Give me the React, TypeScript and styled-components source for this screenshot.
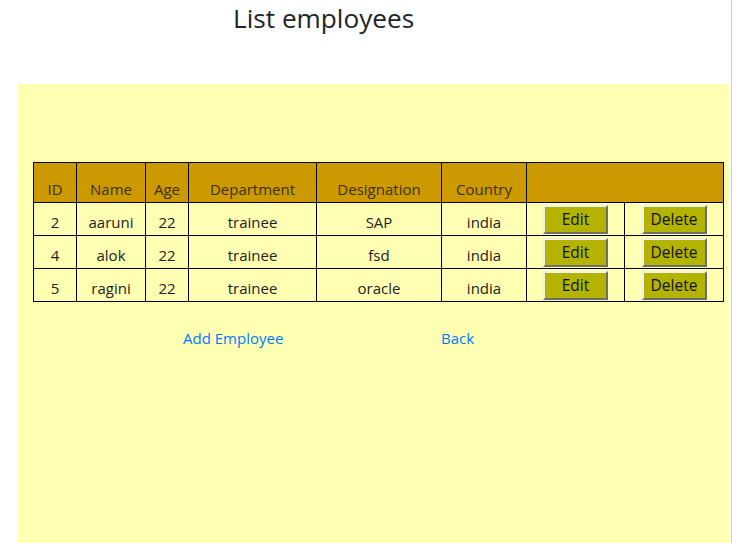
import React from "react";
import styled, { createGlobalStyle } from "styled-components";

const Global = createGlobalStyle`
  html, body { margin: 0; padding: 0; background: #fff; }
  body {
    font-family: "Open Sans", "Noto Sans", sans-serif;
    color: #212529;
    border-right: 1px solid #c8c8c8;
    min-height: 543px;
    box-sizing: border-box;
    width: 732px;
  }
`;

const Page = styled.div`
  display: flex;
  flex-direction: column;
  height: 543px;
  overflow: hidden;
`;

const Title = styled.h2`
  margin: 0;
  padding: 2px 0 0 233px;
  height: 84px;
  box-sizing: border-box;
  font-size: 26.2px;
  font-weight: 400;
  line-height: 32px;
  color: #212529;
`;

const Panel = styled.div`
  margin: 0 2px 0 18px;
  flex: 1;
  background: #ffffb4;
  padding: 78px 6px 0 15px;
`;

const Table = styled.table`
  border-collapse: collapse;
  table-layout: fixed;
  width: 691px;
  font-size: 15px;
  line-height: 20px;
`;

const HeadCell = styled.th`
  background: #cc9900;
  border: 1px solid #000;
  font-weight: 400;
  color: #3b3000;
  height: 40px;
  vertical-align: bottom;
  padding: 0 0 3px;
  box-sizing: border-box;
  text-align: center;
`;

const Cell = styled.td`
  border: 1px solid #000;
  height: 29px;
  padding: 0 0 3px;
  vertical-align: bottom;
  text-align: center;
  color: #222;
`;

const ActionCell = styled.td`
  border: 1px solid #000;
  height: 32px;
  padding: 0;
  vertical-align: middle;
  text-align: center;
`;

const Btn = styled.button`
  display: block;
  margin: 0 auto;
  width: 65px;
  height: 29px;
  box-sizing: border-box;
  background: #b3b300;
  border: 2px solid;
  border-color: #f0f0f0 #6e6e6e #6e6e6e #f0f0f0;
  font-family: inherit;
  font-size: 15.5px;
  line-height: 20px;
  color: #111;
  padding: 0;
  cursor: pointer;
`;

const Links = styled.div`
  display: flex;
  padding: 26px 0 0 150px;
  font-size: 15px;
`;

const Link = styled.a<{ $w: number }>`
  color: #007bff;
  text-decoration: none;
  width: ${(p) => p.$w}px;
`;

const rows = [
  { id: 2, name: "aaruni", age: 22, dept: "trainee", des: "SAP", country: "india" },
  { id: 4, name: "alok", age: 22, dept: "trainee", des: "fsd", country: "india" },
  { id: 5, name: "ragini", age: 22, dept: "trainee", des: "oracle", country: "india" },
];

const widths = [43, 69, 43, 128, 125, 85, 98, 99];

export default function App() {
  return (
    <>
      <Global />
      <Page>
        <Title>List employees</Title>
        <Panel>
          <Table>
            <colgroup>
              {widths.map((w, i) => (
                <col key={i} style={{ width: w }} />
              ))}
            </colgroup>
            <thead>
              <tr>
                <HeadCell>ID</HeadCell>
                <HeadCell>Name</HeadCell>
                <HeadCell>Age</HeadCell>
                <HeadCell>Department</HeadCell>
                <HeadCell>Designation</HeadCell>
                <HeadCell>Country</HeadCell>
                <HeadCell colSpan={2}></HeadCell>
              </tr>
            </thead>
            <tbody>
              {rows.map((r) => (
                <tr key={r.id}>
                  <Cell>{r.id}</Cell>
                  <Cell>{r.name}</Cell>
                  <Cell>{r.age}</Cell>
                  <Cell>{r.dept}</Cell>
                  <Cell>{r.des}</Cell>
                  <Cell>{r.country}</Cell>
                  <ActionCell>
                    <Btn>Edit</Btn>
                  </ActionCell>
                  <ActionCell>
                    <Btn>Delete</Btn>
                  </ActionCell>
                </tr>
              ))}
            </tbody>
          </Table>
          <Links>
            <Link href="#" $w={258}>Add Employee</Link>
            <Link href="#" $w={60}>Back</Link>
          </Links>
        </Panel>
      </Page>
    </>
  );
}
